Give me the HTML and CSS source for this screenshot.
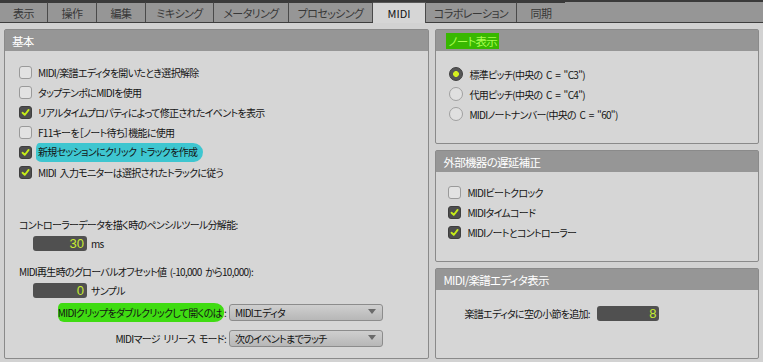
FILE: index.html
```html
<!DOCTYPE html>
<html lang="ja">
<head>
<meta charset="utf-8">
<link rel="stylesheet" href="styles.css">
</head>
<body>
<div class="tabbar">
  <div class="tab w48">表示</div>
  <div class="tab w49">操作</div>
  <div class="tab w49">編集</div>
  <div class="tab w68">ミキシング</div>
  <div class="tab w75">メータリング</div>
  <div class="tab w84">プロセッシング</div>
  <div class="tab active w53">MIDI</div>
  <div class="tab w91">コラボレーション</div>
  <div class="tab last w48">同期</div>
</div>
<div class="content">
  <section class="panel left">
    <div class="phead">基本</div>
    <div class="pbody lbody">
      <div class="row"><span class="cb"></span><span>MIDI/楽譜エディタを開いたとき選択解除</span></div>
      <div class="row"><span class="cb"></span><span>タップテンポにMIDIを使用</span></div>
      <div class="row"><span class="cb on"><svg viewBox="0 0 13 13"><path d="M3 6.8 L5.6 9.4 L10.2 3.4"/></svg></span><span>リアルタイムプロパティによって修正されたイベントを表示</span></div>
      <div class="row"><span class="cb"></span><span>F11キーを［ノート待ち］機能に使用</span></div>
      <div class="row"><span class="cb on"><svg viewBox="0 0 13 13"><path d="M3 6.8 L5.6 9.4 L10.2 3.4"/></svg></span><span class="hl-cyan">新規セッションにクリック トラックを作成</span></div>
      <div class="row"><span class="cb on"><svg viewBox="0 0 13 13"><path d="M3 6.8 L5.6 9.4 L10.2 3.4"/></svg></span><span>MIDI 入力モニターは選択されたトラックに従う</span></div>

      <div class="label first">コントローラーデータを描く時のペンシルツール分解能:</div>
      <div class="inrow"><span class="num">30</span><span>ms</span></div>
      <div class="label">MIDI再生時のグローバルオフセット値 (-10,000 から10,000):</div>
      <div class="inrow"><span class="num">0</span><span>サンプル</span></div>

      <div class="selrow first"><span class="sellabel"><span class="hl-green">MIDIクリップをダブルクリックして開くのは</span>:</span><span class="select">MIDIエディタ<i class="arrow"></i></span></div>
      <div class="selrow"><span class="sellabel">MIDIマージ リリース モード:</span><span class="select">次のイベントまでラッチ<i class="arrow"></i></span></div>
    </div>
  </section>
  <div class="rightcol">
    <section class="panel p1">
      <div class="phead"><span class="hl-note">ノート表示</span></div>
      <div class="pbody r1body">
        <div class="row"><span class="rd on"></span><span>標準ピッチ(中央の C = "C3")</span></div>
        <div class="row"><span class="rd"></span><span>代用ピッチ(中央の C = "C4")</span></div>
        <div class="row"><span class="rd"></span><span>MIDIノートナンバー(中央の C = "60")</span></div>
      </div>
    </section>
    <section class="panel p2">
      <div class="phead">外部機器の遅延補正</div>
      <div class="pbody r2body">
        <div class="row"><span class="cb"></span><span>MIDIビートクロック</span></div>
        <div class="row"><span class="cb on"><svg viewBox="0 0 13 13"><path d="M3 6.8 L5.6 9.4 L10.2 3.4"/></svg></span><span>MIDIタイムコード</span></div>
        <div class="row"><span class="cb on"><svg viewBox="0 0 13 13"><path d="M3 6.8 L5.6 9.4 L10.2 3.4"/></svg></span><span>MIDIノートとコントローラー</span></div>
      </div>
    </section>
    <section class="panel p3">
      <div class="phead">MIDI/楽譜エディタ表示</div>
      <div class="pbody r3body">
        <div class="inrow2"><span class="lbl3">楽譜エディタに空の小節を追加:</span><span class="num wide">8</span></div>
      </div>
    </section>
  </div>
</div>
</body>
</html>
```

FILE: styles.css
```css
* { box-sizing: border-box; }
html, body { margin: 0; padding: 0; }
body {
  width: 763px;
  height: 362px;
  overflow: hidden;
  background: #d2d2d2;
  font-family: "Noto Sans CJK JP", "Noto Sans", sans-serif;
  font-size: 10px;
  letter-spacing: -0.7px;
  word-spacing: 2px;
  font-feature-settings: "palt";
  color: #141414;
}
.tabbar {
  display: flex;
  height: 23px;
  background: #969696;
  border-top: 2px solid #3a3a3a;
  border-bottom: 1px solid #3e3e3e;
}
.tab {
  display: flex;
  align-items: center;
  justify-content: center;
  border-right: 1px solid #4a4a4a;
  border-top: 1px solid #3a3a3a;
  color: #383838;
  font-size: 11px;
  letter-spacing: -0.6px;
}
.tab.active {
  background: #d6d6d6;
  margin-bottom: -1px;
  border-top: 1px solid #5a5a5a;
  color: #111;
  letter-spacing: 0;
}
.tab.last { border-right: none; }
.w48 { width: 48px; }
.w49 { width: 49px; }
.w53 { width: 53px; }
.w68 { width: 68px; }
.w75 { width: 75px; }
.w84 { width: 84px; }
.w91 { width: 91px; }

.content {
  display: flex;
  gap: 6px;
  padding: 6px 4px 0 4px;
}
.panel {
  border: 1px solid #8a8a8a;
  border-radius: 2px;
  background: #d6d6d6;
  display: flex;
  flex-direction: column;
}
.phead {
  height: 21px;
  background: #969696;
  color: #fff;
  font-size: 11.5px;
  letter-spacing: -0.7px;
  display: flex;
  align-items: center;
  padding-left: 7px;
  flex: none;
}
.left { width: 426px; height: 330px; }
.rightcol {
  width: 324px;
  display: flex;
  flex-direction: column;
}
.p1 { height: 115px; }
.p2 { height: 112px; margin-top: 6px; }
.p3 { height: 91px; margin-top: 6px; }

.row {
  display: flex;
  align-items: center;
  height: 20px;
  gap: 6px;
}
.lbody { padding: 11px 0 0 14px; }
.r1body { padding: 13px 0 0 13px; }
.r2body { padding: 10px 0 0 12px; }
.r3body { padding: 16px 0 0 28px; }

.cb {
  width: 13px;
  height: 13px;
  border: 1px solid #9a9a9a;
  border-radius: 3px;
  background: #e2e2e2;
  display: inline-flex;
  flex: none;
}
.cb.on {
  background: #4e4e4e;
  border-color: #3e3e3e;
}
.cb svg { width: 11px; height: 11px; }
.cb path {
  fill: none;
  stroke: #c6ec1a;
  stroke-width: 2.2;
  stroke-linecap: round;
  stroke-linejoin: round;
}
.rd {
  width: 14px;
  height: 14px;
  border-radius: 50%;
  border: 1px solid #a0a0a0;
  background: #e0e0e0;
  flex: none;
}
.rd.on {
  background: radial-gradient(circle, #d6f020 0 2.6px, #565656 3.2px);
  border-color: #3c3c3c;
}

.label { height: 16px; display: flex; align-items: center; }
.label.first { margin-top: 34px; }
.inrow {
  display: flex;
  align-items: center;
  gap: 4px;
  height: 16px;
  margin: 3px 0 12px 14px;
}
.num {
  width: 54px;
  height: 15px;
  background: #505050;
  border-radius: 3px;
  color: #c8ec30;
  font-size: 13px;
  letter-spacing: 0;
  font-family: "Liberation Sans", Arial, sans-serif;
  display: flex;
  align-items: center;
  justify-content: flex-end;
  padding-right: 3px;
}
.num.wide { width: 62px; height: 15px; }
.inrow2 { display: flex; align-items: center; }
.lbl3 { width: 133px; }

.selrow {
  display: flex;
  align-items: center;
  height: 17px;
  margin-top: 9px;
}
.selrow.first { margin-top: -6px; }
.sellabel {
  width: 210px;
  text-align: right;
  padding-right: 3px;
}
.select {
  width: 154px;
  height: 17px;
  border: 1px solid #8c8c8c;
  border-radius: 3px;
  background: linear-gradient(#cfcfcf, #b7b7b7);
  display: flex;
  align-items: center;
  padding-left: 5px;
  position: relative;
  color: #111;
}
.arrow {
  position: absolute;
  right: 6px;
  top: 4px;
  width: 0;
  height: 0;
  border-left: 4px solid transparent;
  border-right: 4px solid transparent;
  border-top: 5px solid #6a6a6a;
}
.hl-cyan {
  background: #3ec6d0;
  border-radius: 3px 10px 9px 6px / 6px 9px 10px 4px;
  padding: 1px 6px 3px 2px;
  margin-left: -2px;
}
.hl-green {
  background: #3fdc12;
  border-radius: 4px 10px 10px 6px / 5px 8px 8px 6px;
  padding: 2px 2px 2px 0;
}
.hl-note {
  background: #38b800;
  color: #a8ff50;
  padding: 0 2px;
  margin-left: 3px;
}
```
